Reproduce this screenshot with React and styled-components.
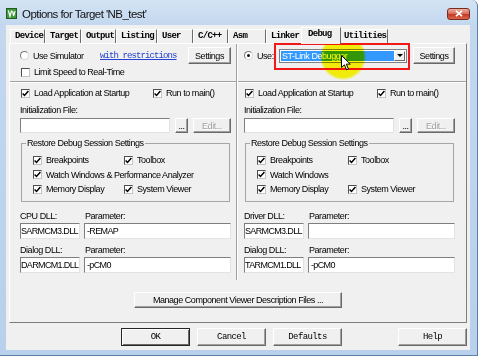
import React from "react";
import styled, { createGlobalStyle, css } from "styled-components";

const GlobalStyle = createGlobalStyle`
  html, body {
    margin: 0;
    padding: 0;
    background: #fff;
  }
  body {
    width: 482px;
    height: 360px;
    overflow: hidden;
    font-family: "Liberation Sans", Arial, sans-serif;
  }
  * {
    box-sizing: border-box;
  }
`;

const Stage = styled.div`
  position: relative;
  width: 482px;
  height: 360px;
`;

const Window = styled.div`
  width: 478px;
  height: 356px;
  display: flex;
  flex-direction: column;
  background: linear-gradient(180deg, #d4e3f4 0px, #c3d8ef 24px, #b8d0eb 100%);
  border-right: 1px solid #5d80a8;
  border-bottom: 1px solid #5d80a8;
  border-top-right-radius: 6px;
`;

const TitleBar = styled.div`
  height: 25px;
  flex: none;
  display: flex;
  align-items: center;
  gap: 5px;
  padding: 2px 7px 0 6px;
`;

const Title = styled.span`
  font: 11.5px/14px "Liberation Sans", Arial, sans-serif;
  letter-spacing: -0.55px;
  color: #111;
  white-space: nowrap;
`;

const CloseBtn = styled.div`
  margin-left: auto;
  width: 23px;
  height: 12px;
  border-radius: 3px;
  border: 1px solid #7c2a1e;
  background: linear-gradient(180deg, #eab0a2 0%, #d8705a 45%, #c43b26 55%, #d9664c 100%);
  display: flex;
  align-items: center;
  justify-content: center;
`;

const Client = styled.div`
  flex: 1;
  margin: 0 7px 5px 6px;
  background: #f0f0f0;
  padding: 2px 3px 4px;
  display: flex;
  flex-direction: column;
`;

const TabStrip = styled.div`
  height: 16px;
  flex: none;
  display: flex;
  align-items: flex-end;
  padding-left: 1px;
  position: relative;
  z-index: 2;
`;

const Tab = styled.div`
  width: ${(p) => p.$w}px;
  height: 14px;
  flex: none;
  padding-left: 4px;
  background: #f0f0f0;
  border-top: 1px solid #fff;
  border-left: 1px solid #fff;
  border-right: 1px solid #6b6b6b;
  font: bold 9px/12px "Liberation Mono", "DejaVu Sans Mono", monospace;
  letter-spacing: -0.7px;
  color: #000;
  white-space: nowrap;
  ${(p) =>
    p.$active &&
    css`
      width: ${p.$w + 4}px;
      height: 17px;
      margin: 0 -2px -1px;
      padding-left: 6px;
      position: relative;
      z-index: 1;
    `}
`;

const Panel = styled.div`
  height: 280px;
  flex: none;
  border: 1px solid;
  border-color: #fff #7d7d7d #7d7d7d #fff;
  display: flex;
  flex-direction: column;
`;

const Columns = styled.div`
  height: 236px;
  display: grid;
  grid-template-columns: 226px 2px 1fr;
`;

const Divider = styled.div`
  border-left: 1px solid #a0a0a0;
  border-right: 1px solid #fff;
`;

const Column = styled.div`
  display: flex;
  flex-direction: column;
  min-width: 0;
`;

const TopSection = styled.div`
  height: 38px;
  flex: none;
  padding: 3px ${(p) => p.$padR}px 0 ${(p) => p.$padL}px;
  border-bottom: 1px solid #a0a0a0;
`;

const Body = styled.div`
  flex: 1;
  border-top: 1px solid #fff;
  padding: 4px ${(p) => p.$padR}px 0 ${(p) => p.$padL}px;
  display: flex;
  flex-direction: column;
`;

const Row = styled.div`
  height: ${(p) => p.$h || 17}px;
  margin-top: ${(p) => p.$mt || 0}px;
  display: flex;
  align-items: center;
  gap: ${(p) => p.$gap || 0}px;
`;

const Text = styled.span`
  font: 9px/12px "Liberation Sans", Arial, sans-serif;
  letter-spacing: -0.45px;
  color: #000;
  white-space: nowrap;
`;

const Item = styled.span`
  display: flex;
  align-items: center;
  gap: 4px;
  flex: none;
  width: ${(p) => (p.$w ? `${p.$w}px` : "auto")};
  padding-left: ${(p) => (p.$indent === undefined ? 1 : p.$indent)}px;
`;

const Box = styled.span`
  width: 9px;
  height: 9px;
  flex: none;
  background: #fff;
  border: 1px solid;
  border-color: #4f4f4f #c4c4c4 #c4c4c4 #4f4f4f;
  display: flex;
  align-items: center;
  justify-content: center;
`;

const RadioCircle = styled.span`
  width: 9px;
  height: 9px;
  flex: none;
  border-radius: 50%;
  background: #fff;
  border: 1px solid;
  border-color: #7a7a7a #d6d6d6 #d6d6d6 #7a7a7a;
  display: flex;
  align-items: center;
  justify-content: center;

  &::after {
    content: "";
    width: 3px;
    height: 3px;
    border-radius: 50%;
    background: ${(p) => (p.$on ? "#111" : "transparent")};
  }
`;

const LinkText = styled.a`
  font: 9px/12px "Liberation Mono", "DejaVu Sans Mono", monospace;
  letter-spacing: -0.9px;
  color: #2340d0;
  text-decoration: underline;
  white-space: nowrap;
`;

const Button = styled.button`
  width: ${(p) => p.$w}px;
  height: ${(p) => p.$h}px;
  flex: none;
  margin: 0;
  padding: 0;
  background: #f0f0f0;
  border: 1px solid;
  border-color: #fff #696969 #696969 #fff;
  box-shadow: inset -1px -1px 0 #a0a0a0;
  font: 9px/12px "Liberation Sans", Arial, sans-serif;
  letter-spacing: -0.45px;
  color: #000;
  white-space: nowrap;
  ${(p) => p.$push && css`margin-left: auto;`}
  ${(p) =>
    p.$off &&
    css`
      color: #a0a0a0;
      text-shadow: 1px 1px 0 #fff;
    `}
  ${(p) =>
    p.$mono &&
    css`
      font-family: "Liberation Mono", "DejaVu Sans Mono", monospace;
      letter-spacing: -0.6px;
    `}
  ${(p) =>
    p.$default &&
    css`
      border-color: #262626;
      box-shadow: inset 1px 1px 0 #fff, inset -1px -1px 0 #696969;
    `}
`;

const ManageButton = styled(Button)`
  margin: 12px auto 0;
`;

const Field = styled.div`
  height: ${(p) => p.$h || 16}px;
  flex: ${(p) => (p.$w ? "none" : "1")};
  width: ${(p) => (p.$w ? `${p.$w}px` : "auto")};
  min-width: 0;
  background: #fff;
  border: 1px solid;
  border-color: #7e7e7e #e3e3e3 #e3e3e3 #7e7e7e;
  padding-left: ${(p) => (p.$pad === undefined ? 1 : p.$pad)}px;
  display: flex;
  align-items: center;
  font: 9px/12px "Liberation Sans", Arial, sans-serif;
  letter-spacing: -0.65px;
  color: #000;
  white-space: nowrap;
  overflow: hidden;
`;

const Group = styled.fieldset`
  margin: 4px 1px 0;
  padding: 0;
  min-width: 0;
  border: 1px solid #a6a6a6;
`;

const Legend = styled.legend`
  margin-left: 4px;
  padding: 0 1px;
  font: 9px/12px "Liberation Sans", Arial, sans-serif;
  letter-spacing: -0.45px;
  color: #000;
`;

const GroupBody = styled.div`
  padding: 4px 0 4px 11px;
`;

const GroupRow = styled.div`
  height: 14.5px;
  display: grid;
  grid-template-columns: 91px auto;
  align-items: center;
`;

const DllBlock = styled.div`
  margin-top: ${(p) => p.$mt}px;
  display: grid;
  grid-template-columns: 60px 1fr;
  grid-template-rows: 12px 16px;
  column-gap: 4px;
  row-gap: 1px;
`;

const ParamLabel = styled(Text)`
  padding-left: 1px;
`;

const ComboWrap = styled.div`
  position: relative;
  flex: none;
`;

const Combo = styled.div`
  width: 128px;
  height: 14px;
  background: #fff;
  border: 1px solid #7f7f7f;
  display: flex;
  padding: 1px;
`;

const Selection = styled.div`
  flex: 1;
  background: #3399ff;
  color: #fff;
  padding-left: 1px;
  font: 9px/10px "Liberation Sans", Arial, sans-serif;
  letter-spacing: -0.45px;
  white-space: nowrap;
`;

const DropBtn = styled.div`
  width: 11px;
  flex: none;
  background: #f0f0f0;
  border: 1px solid;
  border-color: #fff #696969 #696969 #fff;
  display: flex;
  align-items: center;
  justify-content: center;

  &::after {
    content: "";
    border-left: 3px solid transparent;
    border-right: 3px solid transparent;
    border-top: 3px solid #000;
  }
`;

const RedMark = styled.div`
  position: absolute;
  top: -6px;
  left: -5px;
  right: -3px;
  bottom: -7px;
  border: 2px solid #f21818;
  pointer-events: none;
`;

const ButtonBar = styled.div`
  margin-top: 5px;
  height: 18px;
  display: flex;
  justify-content: flex-end;
  gap: 7px;
`;

const Spacer = styled.div`
  width: 42px;
`;

const Spotlight = styled.div`
  position: absolute;
  left: 320px;
  top: 34px;
  width: 46px;
  height: 46px;
  border-radius: 50%;
  background: radial-gradient(circle, rgba(255, 250, 0, 1) 0%, rgba(255, 250, 0, 0.95) 62%, rgba(255, 250, 0, 0) 72%);
  mix-blend-mode: multiply;
  pointer-events: none;
`;

const Cursor = styled.svg`
  position: absolute;
  left: 341px;
  top: 55px;
`;

const tabs = [
  { label: "Device", w: 35 },
  { label: "Target", w: 36 },
  { label: "Output", w: 35 },
  { label: "Listing", w: 41 },
  { label: "User", w: 36 },
  { label: "C/C++", w: 35 },
  { label: "Asm", w: 38 },
  { label: "Linker", w: 37 },
  { label: "Debug", w: 36, active: true },
  { label: "Utilities", w: 49 },
];

function CheckItem({ label, w, checked = true, indent }) {
  return (
    <Item $w={w} $indent={indent}>
      <Box>
        {checked && (
          <svg width="7" height="7" viewBox="0 0 7 7">
            <polyline points="0.6,3.4 2.5,5.4 6.4,0.9" fill="none" stroke="#000" strokeWidth="1.5" />
          </svg>
        )}
      </Box>
      <Text>{label}</Text>
    </Item>
  );
}

function DebugSide({ padL, padR, watchLabel, dllLabel, dll, param, dialogDll }) {
  return (
    <Body $padL={padL} $padR={padR}>
      <Row $h={12}>
        <CheckItem w={132} label="Load Application at Startup" />
        <CheckItem label="Run to main()" />
      </Row>
      <Row $h={12} $mt={5}>
        <Text>Initialization File:</Text>
      </Row>
      <Row $h={15} $mt={2} $gap={5}>
        <Field $h={15} />
        <Button $w={13} $h={15}>...</Button>
        <Button $w={38} $h={15} $off>
          Edit...
        </Button>
      </Row>
      <Group>
        <Legend>Restore Debug Session Settings</Legend>
        <GroupBody>
          <GroupRow>
            <CheckItem indent={0} label="Breakpoints" />
            <CheckItem indent={0} label="Toolbox" />
          </GroupRow>
          <GroupRow>
            <CheckItem indent={0} label={watchLabel} />
          </GroupRow>
          <GroupRow>
            <CheckItem indent={0} label="Memory Display" />
            <CheckItem indent={0} label="System Viewer" />
          </GroupRow>
        </GroupBody>
      </Group>
      <DllBlock $mt={8}>
        <Text>{dllLabel}</Text>
        <ParamLabel>Parameter:</ParamLabel>
        <Field $pad={0}>{dll}</Field>
        <Field $pad={2}>{param}</Field>
      </DllBlock>
      <DllBlock $mt={5}>
        <Text>Dialog DLL:</Text>
        <ParamLabel>Parameter:</ParamLabel>
        <Field $pad={0}>{dialogDll}</Field>
        <Field $pad={2}>-pCM0</Field>
      </DllBlock>
    </Body>
  );
}

export default function App() {
  return (
    <Stage>
      <GlobalStyle />
      <Window>
        <TitleBar>
          <svg width="11" height="11" viewBox="0 0 11 11">
            <rect x="0.5" y="0.5" width="10" height="10" fill="#3f9a3a" stroke="#1f5c1d" />
            <path d="M2.3 2.5 L4 8.3 L5.6 2.5 M6.6 3.2 L7.6 8 L9 3.2" fill="none" stroke="#fff" strokeWidth="1.2" />
          </svg>
          <Title>Options for Target 'NB_test'</Title>
          <CloseBtn>
            <svg width="8" height="7" viewBox="0 0 8 7">
              <path d="M1 0.8 L7 6.2 M7 0.8 L1 6.2" stroke="#fff" strokeWidth="1.7" />
            </svg>
          </CloseBtn>
        </TitleBar>
        <Client>
          <TabStrip>
            {tabs.map((t) => (
              <Tab key={t.label} $w={t.w} $active={t.active}>
                {t.label}
              </Tab>
            ))}
          </TabStrip>
          <Panel>
            <Columns>
              <Column>
                <TopSection $padL={10} $padR={5}>
                  <Row>
                    <Item $w={80} $indent={0}>
                      <RadioCircle />
                      <Text>Use Simulator</Text>
                    </Item>
                    <LinkText href="#">with restrictions</LinkText>
                    <Button $w={43} $h={17} $push>
                      Settings
                    </Button>
                  </Row>
                  <Row $h={12} $mt={2}>
                    <CheckItem label="Limit Speed to Real-Time" checked={false} />
                  </Row>
                </TopSection>
                <DebugSide
                  padL={10}
                  padR={5}
                  watchLabel="Watch Windows & Performance Analyzer"
                  dllLabel="CPU DLL:"
                  dll="SARMCM3.DLL"
                  param="-REMAP"
                  dialogDll="DARMCM1.DLL"
                />
              </Column>
              <Divider />
              <Column>
                <TopSection $padL={6} $padR={11}>
                  <Row>
                    <Item $w={35} $indent={0}>
                      <RadioCircle $on />
                      <Text>Use:</Text>
                    </Item>
                    <ComboWrap>
                      <Combo>
                        <Selection>ST-Link Debugger</Selection>
                        <DropBtn />
                      </Combo>
                      <RedMark />
                    </ComboWrap>
                    <Button $w={42} $h={17} $push>
                      Settings
                    </Button>
                  </Row>
                </TopSection>
                <DebugSide
                  padL={6}
                  padR={11}
                  watchLabel="Watch Windows"
                  dllLabel="Driver DLL:"
                  dll="SARMCM3.DLL"
                  param=""
                  dialogDll="TARMCM1.DLL"
                />
              </Column>
            </Columns>
            <ManageButton $w={208} $h={16}>
              Manage Component Viewer Description Files ...
            </ManageButton>
          </Panel>
          <ButtonBar>
            <Button $w={69} $h={18} $mono $default>
              OK
            </Button>
            <Button $w={69} $h={18} $mono>
              Cancel
            </Button>
            <Button $w={69} $h={18} $mono>
              Defaults
            </Button>
            <Spacer />
            <Button $w={69} $h={18} $mono>
              Help
            </Button>
          </ButtonBar>
        </Client>
      </Window>
      <Spotlight />
      <Cursor width="11" height="16" viewBox="0 0 11 16">
        <path d="M0.5 0.5 L0.5 12.5 L3.4 9.8 L5.6 14.8 L7.5 14 L5.3 9.1 L9.3 9.1 Z" fill="#fff" stroke="#000" strokeWidth="1" strokeLinejoin="round" />
      </Cursor>
    </Stage>
  );
}
